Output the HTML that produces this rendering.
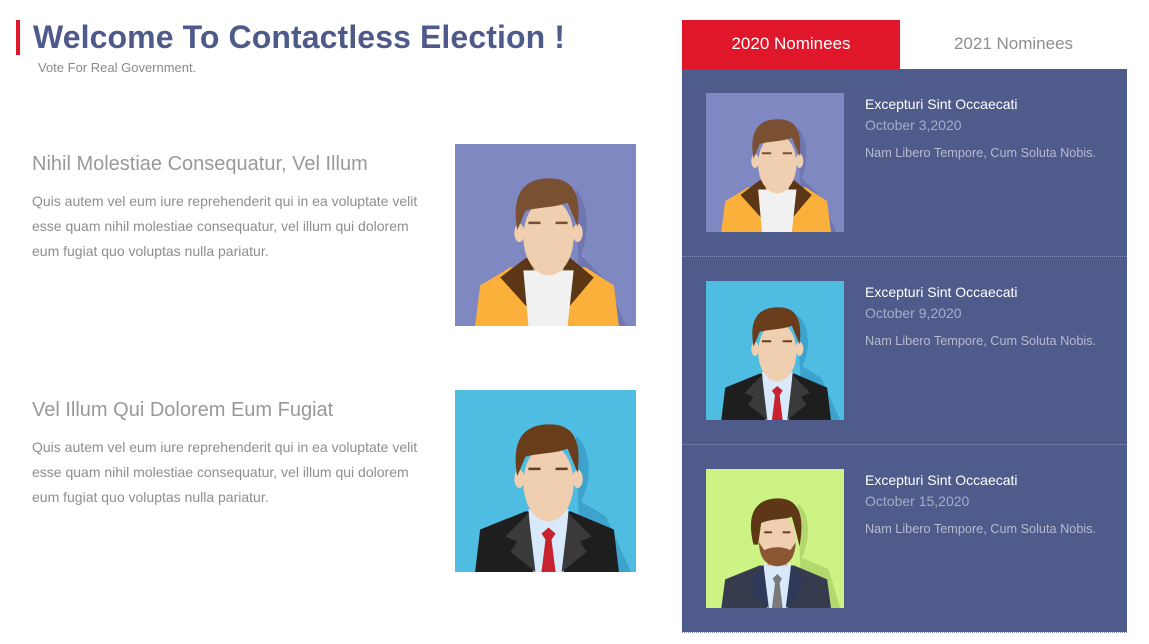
<!DOCTYPE html>
<html><head><meta charset="utf-8"><style>
*{margin:0;padding:0;box-sizing:border-box}
body{width:1149px;height:644px;background:#fff;font-family:"Liberation Sans",Arial,sans-serif;position:relative;overflow:hidden}
.a{position:absolute}
.bar{left:16px;top:20px;width:4px;height:35px;background:#e0162b}
h1{position:absolute;left:33px;top:19px;font-size:32px;letter-spacing:0.1px;font-weight:bold;color:#4e5a8a;white-space:nowrap}
.sub{left:38px;top:60px;font-size:13px;color:#8a8a8a}
.h2{left:32px;font-size:20px;color:#999;white-space:nowrap}
.p{left:32px;width:392px;font-size:14px;line-height:25px;color:#8e8e8e}
svg{position:absolute;display:block}
.tab{top:20px;height:49px;font-size:17px;text-align:center;line-height:48px}
.panel{left:682px;top:69px;width:445px;height:563px;background:#4f5b8b}
.sep{left:682px;width:445px;height:0;border-top:1px dotted #8a93c0}
.t{left:865px;font-size:14px;color:#fff;white-space:nowrap}
.d{left:865px;font-size:14px;color:#a7acc8;white-space:nowrap}
.n{left:865px;font-size:12.7px;color:#b7bad0;white-space:nowrap}
</style></head><body>
<div class="a bar"></div>
<h1>Welcome To Contactless Election !</h1>
<div class="a sub">Vote For Real Government.</div>

<div class="a h2" style="top:153px">Nihil Molestiae Consequatur, Vel Illum</div>
<div class="a p" style="top:189px">Quis autem vel eum iure reprehenderit qui in ea voluptate velit esse quam nihil molestiae consequatur, vel illum qui dolorem eum fugiat quo voluptas nulla pariatur.</div>
<div class="a h2" style="top:399px">Vel Illum Qui Dolorem Eum Fugiat</div>
<div class="a p" style="top:435px">Quis autem vel eum iure reprehenderit qui in ea voluptate velit esse quam nihil molestiae consequatur, vel illum qui dolorem eum fugiat quo voluptas nulla pariatur.</div>

<svg style="left:455px;top:144px" width="181" height="182" viewBox="0 0 180 180" preserveAspectRatio="none">
<rect width="180" height="180" fill="#8088c2"/>
<path d="M120 45 C135 60 132 95 125 110 L150 135 L170 180 L125 180Z" fill="#6f76b0"/>
<path d="M20 180 L25 140 L55 122 L130 122 L158 140 L163 180Z" fill="#fbb03b"/>
<path d="M45 132 L70 113 L115 113 L138 132 L110 165 L75 165Z" fill="#5c3715"/>
<path d="M68 125 L118 125 L112 180 L73 180Z" fill="#f1f1f1"/>
<rect x="78" y="100" width="30" height="25" fill="#d9a98a"/>
<path d="M78 120 L93 142 L108 120Z" fill="#f1f1f1"/>
<ellipse cx="64" cy="88" rx="5" ry="9" fill="#efcfb0"/>
<ellipse cx="122" cy="88" rx="5" ry="9" fill="#efcfb0"/>
<ellipse cx="93" cy="92" rx="25" ry="38" fill="#efcfb0"/>
<path d="M62 85 C55 45 72 34 94 34 C118 34 126 50 122 82 L117 70 L112 58 C100 63 85 62 70 66 Z" fill="#7a5033"/>
<path d="M73 78 h12 M100 78 h12" stroke="#7a5033" stroke-width="2.5"/>
</svg>

<svg style="left:455px;top:390px" width="181" height="182" viewBox="0 0 180 180" preserveAspectRatio="none">
<rect width="180" height="180" fill="#4fbce2"/>
<path d="M120 45 C138 60 135 95 125 110 L150 125 L175 180 L125 180Z" fill="#3ea3cc"/>
<path d="M20 180 L25 138 L70 120 L115 120 L158 138 L163 180Z" fill="#1e1e1e"/>
<path d="M73 118 L113 118 L108 180 L78 180Z" fill="#d7e9fb"/>
<rect x="78" y="100" width="30" height="22" fill="#d9a98a"/>
<path d="M86 142 L93 136 L100 142 L96 148 L100 180 L86 180 L90 148Z" fill="#c9222f"/>
<path d="M73 122 L50 145 L62 150 L55 160 L80 180Z" fill="#3a3a3a"/>
<path d="M113 122 L136 145 L124 150 L131 160 L106 180Z" fill="#3a3a3a"/>
<ellipse cx="64" cy="88" rx="5" ry="9" fill="#efcfb0"/>
<ellipse cx="122" cy="88" rx="5" ry="9" fill="#efcfb0"/>
<ellipse cx="93" cy="92" rx="25" ry="38" fill="#efcfb0"/>
<path d="M62 85 C55 45 72 34 94 34 C118 34 126 50 122 82 L117 70 L112 58 C100 63 85 62 70 66 Z" fill="#6a3d1a"/>
<path d="M73 78 h12 M100 78 h12" stroke="#6a3d1a" stroke-width="2.5"/>
</svg>

<div class="a tab" style="left:682px;width:218px;background:#e0162b;color:#fff">2020 Nominees</div>
<div class="a tab" style="left:900px;width:227px;color:#8e8e8e">2021 Nominees</div>
<div class="a panel"></div>
<div class="a sep" style="top:256px"></div>
<div class="a sep" style="top:444px"></div>
<div class="a sep" style="top:632px"></div>

<svg style="left:706px;top:93px" width="138" height="139" viewBox="0 0 180 180" preserveAspectRatio="none">
<rect width="180" height="180" fill="#8088c2"/>
<path d="M120 45 C135 60 132 95 125 110 L150 135 L170 180 L125 180Z" fill="#6f76b0"/>
<path d="M20 180 L25 140 L55 122 L130 122 L158 140 L163 180Z" fill="#fbb03b"/>
<path d="M45 132 L70 113 L115 113 L138 132 L110 165 L75 165Z" fill="#5c3715"/>
<path d="M68 125 L118 125 L112 180 L73 180Z" fill="#f1f1f1"/>
<rect x="78" y="100" width="30" height="25" fill="#d9a98a"/>
<path d="M78 120 L93 142 L108 120Z" fill="#f1f1f1"/>
<ellipse cx="64" cy="88" rx="5" ry="9" fill="#efcfb0"/>
<ellipse cx="122" cy="88" rx="5" ry="9" fill="#efcfb0"/>
<ellipse cx="93" cy="92" rx="25" ry="38" fill="#efcfb0"/>
<path d="M62 85 C55 45 72 34 94 34 C118 34 126 50 122 82 L117 70 L112 58 C100 63 85 62 70 66 Z" fill="#7a5033"/>
<path d="M73 78 h12 M100 78 h12" stroke="#7a5033" stroke-width="2.5"/>
</svg>
<div class="a t" style="top:96px">Excepturi Sint Occaecati</div>
<div class="a d" style="top:117px">October 3,2020</div>
<div class="a n" style="top:146px">Nam Libero Tempore, Cum Soluta Nobis.</div>

<svg style="left:706px;top:281px" width="138" height="139" viewBox="0 0 180 180" preserveAspectRatio="none">
<rect width="180" height="180" fill="#4fbce2"/>
<path d="M120 45 C138 60 135 95 125 110 L150 125 L175 180 L125 180Z" fill="#3ea3cc"/>
<path d="M20 180 L25 138 L70 120 L115 120 L158 138 L163 180Z" fill="#1e1e1e"/>
<path d="M73 118 L113 118 L108 180 L78 180Z" fill="#d7e9fb"/>
<rect x="78" y="100" width="30" height="22" fill="#d9a98a"/>
<path d="M86 142 L93 136 L100 142 L96 148 L100 180 L86 180 L90 148Z" fill="#c9222f"/>
<path d="M73 122 L50 145 L62 150 L55 160 L80 180Z" fill="#3a3a3a"/>
<path d="M113 122 L136 145 L124 150 L131 160 L106 180Z" fill="#3a3a3a"/>
<ellipse cx="64" cy="88" rx="5" ry="9" fill="#efcfb0"/>
<ellipse cx="122" cy="88" rx="5" ry="9" fill="#efcfb0"/>
<ellipse cx="93" cy="92" rx="25" ry="38" fill="#efcfb0"/>
<path d="M62 85 C55 45 72 34 94 34 C118 34 126 50 122 82 L117 70 L112 58 C100 63 85 62 70 66 Z" fill="#6a3d1a"/>
<path d="M73 78 h12 M100 78 h12" stroke="#6a3d1a" stroke-width="2.5"/>
</svg>
<div class="a t" style="top:284px">Excepturi Sint Occaecati</div>
<div class="a d" style="top:305px">October 9,2020</div>
<div class="a n" style="top:334px">Nam Libero Tempore, Cum Soluta Nobis.</div>

<svg style="left:706px;top:469px" width="138" height="139" viewBox="0 0 180 180" preserveAspectRatio="none">
<rect width="180" height="180" fill="#ccf384"/>
<path d="M120 45 C138 60 135 95 125 115 L160 130 L175 180 L125 180Z" fill="#b2d86e"/>
<path d="M20 180 L25 143 L70 125 L115 125 L158 143 L163 180Z" fill="#363b4d"/>
<path d="M75 122 L111 122 L106 180 L80 180Z" fill="#d7e9fb"/>
<path d="M87 142 L93 136 L99 142 L96 148 L100 180 L86 180 L90 148Z" fill="#7a7a7a"/>
<path d="M75 125 L55 145 L67 150 L60 160 L82 180Z" fill="#2f3a5a"/>
<path d="M111 125 L131 145 L119 150 L126 160 L104 180Z" fill="#2f3a5a"/>
<rect x="80" y="105" width="26" height="20" fill="#d9a98a"/>
<ellipse cx="93" cy="92" rx="24" ry="34" fill="#efcfb0"/>
<path d="M69 95 C70 120 82 125 93 126 C104 125 116 120 117 95 L110 105 C100 100 86 100 76 105Z" fill="#8a5634"/>
<path d="M62 98 C50 50 72 38 94 38 C118 38 130 55 122 100 L117 80 L112 62 C100 66 85 64 72 70 L68 98Z" fill="#5e3716"/>
<path d="M76 82 h10 M100 82 h10" stroke="#5e3716" stroke-width="2.5"/>
</svg>
<div class="a t" style="top:472px">Excepturi Sint Occaecati</div>
<div class="a d" style="top:493px">October 15,2020</div>
<div class="a n" style="top:522px">Nam Libero Tempore, Cum Soluta Nobis.</div>
</body></html>
